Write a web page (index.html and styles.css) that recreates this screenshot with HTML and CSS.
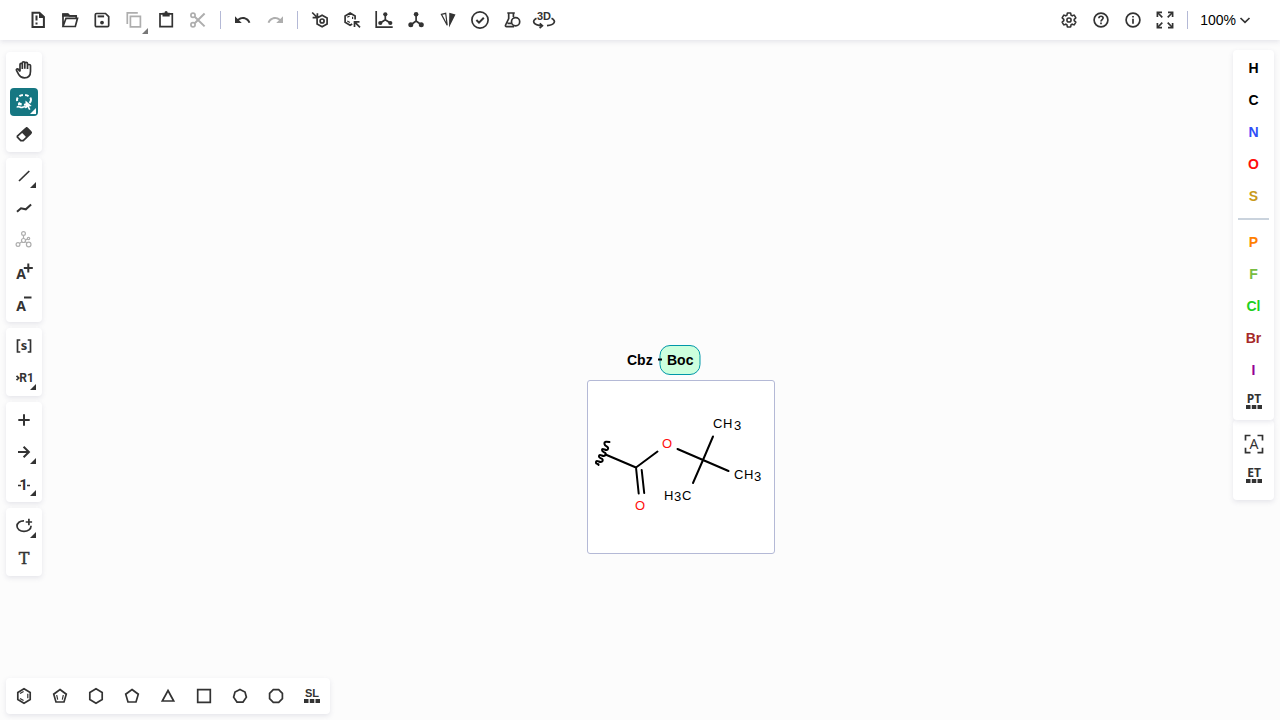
FILE: index.html
```html
<!DOCTYPE html>
<html lang="en">
<head>
<meta charset="utf-8">
<title>Molecule editor</title>
<link rel="stylesheet" href="styles.css">
</head>
<body>
<header class="topbar">
  <button class="tool" aria-label="New document"><svg class="icon" viewBox="0 0 28 28"><path class="l2" d="M8.500 6.700h6.900l4.500 4.300v10H8.500z"/><path class="f" d="M15 6v6h5.500z"/><path class="l2" d="M12.500 9.500v5M12.500 16.600v2"/></svg></button>
  <button class="tool" aria-label="Open"><svg class="icon" viewBox="0 0 28 28"><path class="l" d="M7 20.500V8.200h4.800l1.600 1.800h6.800v2.300M7 20.500h12.300l2.200-8.200H10z"/><path class="f" d="M6.200 7.500h6l1.700 1.500h7v1.700H6.200z"/></svg></button>
  <button class="tool" aria-label="Save"><svg class="icon" viewBox="0 0 28 28"><path class="l" d="M8.500 7.500h9l3.200 3.200v8.800a1.200 1.200 0 0 1-1.200 1.200h-11a1.200 1.200 0 0 1-1.200-1.200V8.700a1.200 1.200 0 0 1 1.200-1.200z"/><path class="l2" d="M9.600 10.400h6.500"/><circle class="f" cx="14" cy="16.600" r="1.900"/></svg></button>
  <button class="tool faded more-edge" aria-label="Copy"><svg class="icon" viewBox="0 0 28 28"><path class="l" d="M7.300 18V6.900h10.500M10.400 10.300h10v10.600h-10z"/></svg></button>
  <button class="tool" aria-label="Paste"><svg class="icon" viewBox="0 0 28 28"><path class="l" d="M8 7.900h12.300v12.700H8z"/><path class="f" d="M10.500 6.700h2a1.600 1.600 0 0 1 3.200 0h2v3.800h-7.200z"/></svg></button>
  <button class="tool faded" aria-label="Cut"><svg class="icon" viewBox="0 0 28 28"><circle class="l" cx="9" cy="9.200" r="2.100"/><circle class="l" cx="9" cy="18.700" r="2.100"/><path class="l2" d="M10.700 10.700l9.900 9.700M10.700 17.300l9.900-9.800"/></svg></button>
  <span class="rule"></span>
  <button class="tool" aria-label="Undo"><svg class="icon" viewBox="0 0 28 28"><path class="f" transform="translate(4.500 5) scale(.75)" d="M12.5 8c-2.65 0-5.05.99-6.9 2.6L2 7v9h9l-3.62-3.62c1.39-1.16 3.16-1.88 5.12-1.88 3.54 0 6.55 2.31 7.6 5.5l2.37-.78C21.08 11.03 17.15 8 12.5 8z"/></svg></button>
  <button class="tool faded" aria-label="Redo"><svg class="icon" viewBox="0 0 28 28"><path class="f" transform="translate(23.500 5) scale(-.75 .75)" d="M12.5 8c-2.65 0-5.05.99-6.9 2.6L2 7v9h9l-3.62-3.62c1.39-1.16 3.16-1.88 5.12-1.88 3.54 0 6.55 2.31 7.6 5.5l2.37-.78C21.08 11.03 17.15 8 12.5 8z"/></svg></button>
  <span class="rule"></span>
  <button class="tool" aria-label="Aromatize"><svg class="icon" viewBox="0 0 28 28"><path class="l" d="M16.100 9.200l5 2.900v5.800l-5 2.900-5-2.900v-5.800zM6.200 6.500l5 5M11.400 7.200v4.500H6.600"/><circle class="l" cx="16.100" cy="15" r="2"/></svg></button>
  <button class="tool" aria-label="Dearomatize"><svg class="icon" viewBox="0 0 28 28"><path class="l" d="M14.200 18l-2.100 1.200-5-2.900V9.900l5-2.900 5 2.900v3.700M22 21.400l-5.200-5.200M16.500 21v-5.100h5"/><path class="l1" d="M9.300 11.300l2.300-1.400M9.300 15l2.600 1.500M14.600 10.700v2.400"/></svg></button>
  <button class="tool" aria-label="Layout"><svg class="icon" viewBox="0 0 28 28"><path class="l" d="M6.200 5v16.200h16.500M15.300 8.300v5.500L10.300 17M15.300 13.800l5 3.200"/><circle class="f" cx="15.300" cy="8.300" r="2.100"/><circle class="f" cx="10.300" cy="17" r="2.100"/><circle class="f" cx="20.300" cy="17" r="2.100"/></svg></button>
  <button class="tool" aria-label="Clean up"><svg class="icon" viewBox="0 0 28 28"><path class="l" d="M14.100 8.300V15L9 18.800M14.100 15l5.200 3.800"/><circle class="f" cx="14.100" cy="8.200" r="2.300"/><circle class="f" cx="8.800" cy="18.800" r="2.500"/><circle class="f" cx="19.300" cy="18.800" r="2.500"/></svg></button>
  <button class="tool" aria-label="Calculate CIP"><svg class="icon" viewBox="0 0 28 28"><path class="l1" d="M7.400 8.400l4.300-1.100 1.500 12z"/><path class="f" d="M15.300 6.800l6.200 1.700-6.500 13z"/></svg></button>
  <button class="tool" aria-label="Check structure"><svg class="icon" viewBox="0 0 28 28"><circle class="l" cx="14" cy="14" r="8.100"/><path class="l2" d="M10.400 14l2.600 2.600 4.800-4.900"/></svg></button>
  <button class="tool" aria-label="Calculated values"><svg class="icon" viewBox="0 0 28 28"><path class="l" d="M9.300 7h7.500M10.700 7v5.500L7.600 19c-.4.900 0 1.700 1 1.700h7.500M15.400 7v4M9.500 17.300h3.700"/><circle class="l" cx="17.600" cy="15.800" r="4.100"/></svg></button>
  <button class="tool" aria-label="3D viewer"><svg class="icon" viewBox="0 0 28 28"><text class="glyph sans" x="14" y="14" font-size="11">3D</text><path class="l" d="M6.500 12.200c-5 2.700-3.500 6.800 5.500 7.500M9.800 17.300l2.600 2.400-2.800 2.300M21.500 12.200c5 2.700 3.500 6.600-4.500 7.500"/></svg></button>
  <div class="top-right">
    <button class="tool" aria-label="Settings"><svg class="icon" viewBox="0 0 28 28"><g class="gear" transform="translate(5.600 5.600) scale(.7)"><path d="M19.43 12.98c.04-.32.07-.64.07-.98 0-.34-.03-.66-.07-.98l2.11-1.65c.19-.15.24-.42.12-.64l-2-3.46c-.09-.16-.26-.25-.44-.25-.06 0-.12.01-.17.03l-2.49 1c-.52-.4-1.08-.73-1.69-.98l-.38-2.65C14.46 2.18 14.25 2 14 2h-4c-.25 0-.46.18-.49.42l-.38 2.65c-.61.25-1.17.59-1.69.98l-2.49-1c-.06-.02-.12-.03-.18-.03-.17 0-.34.09-.43.25l-2 3.46c-.13.22-.07.49.12.64l2.11 1.65c-.04.32-.07.65-.07.98 0 .33.03.66.07.98l-2.11 1.65c-.19.15-.24.42-.12.64l2 3.46c.09.16.26.25.44.25.06 0 .12-.01.17-.03l2.49-1c.52.4 1.08.73 1.69.98l.38 2.65c.03.24.24.42.49.42h4c.25 0 .46-.18.49-.42l.38-2.65c.61-.25 1.17-.59 1.69-.98l2.49 1c.06.02.12.03.18.03.17 0 .34-.09.43-.25l2-3.46c.12-.22.07-.49-.12-.64z"/><circle cx="12" cy="12" r="3"/></g></svg></button>
    <button class="tool" aria-label="Help"><svg class="icon" viewBox="0 0 28 28"><circle class="l" cx="14" cy="14" r="6.900"/><path class="l" d="M11.900 12.300c.1-2.800 4.200-2.600 4.200-.2 0 1.500-2.100 1.600-2.100 3.400M14 16.600v1.600"/></svg></button>
    <button class="tool" aria-label="About"><svg class="icon" viewBox="0 0 28 28"><circle class="l" cx="14" cy="14" r="6.900"/><path class="l" d="M14 12.800v5M14 10v1.600"/></svg></button>
    <button class="tool" aria-label="Fullscreen"><svg class="icon" viewBox="0 0 28 28"><path class="l" d="M7 7l4.300 4.300M21 7l-4.300 4.300M7 21l4.300-4.300M21 21l-4.300-4.300"/><path class="l" d="M6.400 11V6.400H11M17 6.400h4.600V11M6.400 17v4.600H11M17 21.600h4.600V17"/></svg></button>
    <span class="rule"></span>
    <button class="zoom">100%<svg class="chevron" viewBox="0 0 12 12"><path class="l" d="M1.500 4L6 8.300 10.500 4"/></svg></button>
  </div>
</header>

<main class="workspace">
  <section class="canvas" aria-label="Canvas">
    <svg class="chain" width="76" height="32" viewBox="0 0 76 32">
      <rect class="mono-box" x="34" y="1.500" width="40" height="29" rx="10"/>
      <path d="M32 15.500h4" stroke="#000" stroke-width="2"/>
      <text x="1" y="21">Cbz</text><text x="41" y="21">Boc</text>
    </svg>
    <div class="preview">
      <svg width="186" height="172" viewBox="588 381 186 172">
        <g class="bond">
          <path d="M605.500 454.500L636 467.500l21.500-16M677.500 449l25.500 11 25.500 11M713 436.500l-10 23.500-10 23M636 467.500l2.700 26M641.700 470l2.500 23"/>
          <path d="M609.500 442C607 441.500 604 441 604.500 444S609 446 608 449 602 447 602 450 607 452 605.500 455 599.500 453 599 456 604 458 602.500 461 596.500 459 596 462 599 463 598.500 465"/>
        </g>
        <g class="atoms">
          <text x="713 723 734" y="428 428 430">CH3</text>
          <text x="734 744 754" y="479 479 481">CH3</text>
          <text x="664 674 682" y="500 501 500">H3C</text>
          <text class="oxygen" x="662" y="448">O</text>
          <text class="oxygen" x="635" y="510">O</text>
        </g>
      </svg>
    </div>
  </section>

  <nav class="left" aria-label="Tools">
    <div class="panel">
      <button class="tool" aria-label="Hand"><svg class="icon" viewBox="0 0 28 28"><path class="l" d="M10 15.500V8.600c0-1.600 2.300-1.600 2.300 0V13M12.300 12V7c0-1.700 2.500-1.700 2.500 0v5.800M14.800 12V7.600c0-1.600 2.700-1.600 2.700 0V13M17.500 12V9.600c0-1.500 3-1.500 3 0v5.700c0 4.200-2.400 6.600-6 6.600-2.900 0-4.500-1-5.700-3.200l-2.300-4.200c-.6-1.400 1-2.200 1.900-1.100l1.600 2.100"/></svg></button>
      <button class="tool active more" aria-label="Lasso selection" aria-pressed="true"><svg class="icon" viewBox="0 0 28 28"><ellipse class="l2" cx="14" cy="11.800" rx="7" ry="4.900" stroke-dasharray="3.600 2.200"/><path class="l" d="M7 19.500c1-2.600 3.500 1 5.500-.2s2.500-.7 4 .2M8 16.500h3"/><path class="f" d="M15.500 12.500v8l2-1.500 1.500 3 1.500-.8-1.500-2.800 2.700-.3z"/></svg></button>
      <button class="tool" aria-label="Erase"><svg class="icon" viewBox="0 0 28 28"><path class="l" d="M7.400 16.200l8.500-7.900c.5-.5 1-.5 1.500 0l3.400 3.500c.5.500.5 1 0 1.500l-7.600 7.300h-2.400l-3.400-3.400z"/><path class="f" d="M11.500 12.300l5.200-5 5.100 5.200-5.300 5z"/></svg></button>
    </div>
    <div class="panel">
      <button class="tool more" aria-label="Single bond"><svg class="icon" viewBox="0 0 28 28"><path class="l" d="M9 19L19.300 9"/></svg></button>
      <button class="tool" aria-label="Chain"><svg class="icon" viewBox="0 0 28 28"><path class="l2" d="M7 17.800l4-3.500 4.800 1 5.300-4.800"/></svg></button>
      <button class="tool faded" aria-label="Stereochemistry"><svg class="icon" viewBox="0 0 28 28"><g class="l1"><circle cx="13.500" cy="7.500" r="1.900"/><circle cx="13.500" cy="14.500" r="2"/><circle cx="8" cy="18.500" r="1.900"/><circle cx="18.700" cy="18.500" r="2.300"/><circle cx="18.500" cy="12.500" r="1.200"/><path d="M13.500 9.400v3M11.800 15.700l-2.200 1.700M15.300 15.600l1.600 1.400M15.400 14l2-.9"/></g></svg></button>
      <button class="tool" aria-label="Charge plus"><svg class="icon" viewBox="0 0 28 28"><text class="glyph" x="11" y="21" font-size="14">A</text><path class="l2" d="M13.800 10h9M18.300 5.500v9"/></svg></button>
      <button class="tool" aria-label="Charge minus"><svg class="icon" viewBox="0 0 28 28"><text class="glyph" x="11" y="21" font-size="14">A</text><path class="l2" d="M14 7.500h7.500"/></svg></button>
    </div>
    <div class="panel">
      <button class="tool" aria-label="S-group"><svg class="icon" viewBox="0 0 28 28"><path class="l" d="M10.300 8H7.500v12h2.800M17.700 8h2.800v12h-2.800"/><text class="glyph" x="14" y="18" font-size="13">s</text></svg></button>
      <button class="tool more" aria-label="R-group"><svg class="icon" viewBox="0 0 28 28"><path class="l" d="M6.500 11.800L8.800 14l-2.300 2.200"/><text class="glyph mark" x="16.500" y="18" font-size="12">R1</text></svg></button>
    </div>
    <div class="panel">
      <button class="tool" aria-label="Reaction plus"><svg class="icon" viewBox="0 0 28 28"><path class="l2" d="M8.300 14h11.400M14 8.300v11.400"/></svg></button>
      <button class="tool more" aria-label="Reaction arrow"><svg class="icon" viewBox="0 0 28 28"><path class="l2" d="M8 14h10.500M13.600 8.800l5.300 5.200-5.300 5.200"/></svg></button>
      <button class="tool more" aria-label="Reaction mapping"><svg class="icon" viewBox="0 0 28 28"><path class="l" d="M8 15.500h3M17 15.500h3"/><text class="glyph mark" x="13.500" y="20" font-size="15">1</text></svg></button>
    </div>
    <div class="panel">
      <button class="tool more" aria-label="Shape ellipse"><svg class="icon" viewBox="0 0 28 28"><path class="l" d="M14 8.800c-4-.2-7 2.200-7 5.200s3 5.400 7 5.400 7-2.400 7-5.200v-.4"/><path class="l" d="M15.700 10h6.400M18.900 6.800v6.400"/></svg></button>
      <button class="tool" aria-label="Add text"><svg class="icon" viewBox="0 0 28 28"><text class="glyph slab" x="14" y="20" font-size="16">T</text></svg></button>
    </div>
  </nav>

  <aside class="right" aria-label="Atoms">
    <div class="atom-list">
      <button class="tool">H</button>
      <button class="tool">C</button>
      <button class="tool n">N</button>
      <button class="tool o">O</button>
      <button class="tool s">S</button>
      <span class="divider"></span>
      <button class="tool p">P</button>
      <button class="tool fl">F</button>
      <button class="tool cl">Cl</button>
      <button class="tool br">Br</button>
      <button class="tool i">I</button>
      <button class="tool" aria-label="Periodic table"><svg class="icon" viewBox="0 0 28 28"><text class="glyph" x="14" y="15" font-size="12">PT</text><path class="f" d="M6 17h4.500v4H6zM11.800 17h4.500v4h-4.500zM17.500 17H22v4h-4.500z"/></svg></button>
    </div>
    <div class="extra-list">
      <button class="tool" aria-label="Any atom"><svg class="icon" viewBox="0 0 28 28"><path class="l" d="M10.500 5.500h-5v5M17.500 5.500h5v5M10.500 22.700h-5v-5M17.500 22.700h5v-5"/><text class="glyph thin" x="14" y="19" font-size="14">A</text></svg></button>
      <button class="tool" aria-label="Extended table"><svg class="icon" viewBox="0 0 28 28"><text class="glyph" x="14" y="15" font-size="12">ET</text><path class="f" d="M6 17h4.500v4H6zM11.800 17h4.500v4h-4.500zM17.500 17H22v4h-4.500z"/></svg></button>
    </div>
  </aside>

  <nav class="bottom panel" aria-label="Templates">
    <button class="tool" aria-label="Benzene"><svg class="icon" viewBox="0 0 28 28"><path class="l" d="M14 6.800l6.200 3.600v7.200L14 21.200l-6.200-3.600v-7.200z"/><path class="l1" d="M10 11.500l3.600-2.100M10 16.500l3.600 2.100M17.800 11.700v4.600"/></svg></button>
    <button class="tool" aria-label="Cyclopentadiene"><svg class="icon" viewBox="0 0 28 28"><path class="l" d="M14 7.500l6.300 4.700L18 20h-8l-2.300-7.800z"/><path class="l1" d="M10.700 13l1 4.700M17.300 13l-1 4.700"/></svg></button>
    <button class="tool" aria-label="Cyclohexane"><svg class="icon" viewBox="0 0 28 28"><path class="l" d="M14 6.800l6.200 3.600v7.200L14 21.200l-6.200-3.600v-7.200z"/></svg></button>
    <button class="tool" aria-label="Cyclopentane"><svg class="icon" viewBox="0 0 28 28"><path class="l" d="M14 7.500l6.300 4.700L18 20h-8l-2.300-7.800z"/></svg></button>
    <button class="tool" aria-label="Cyclopropane"><svg class="icon" viewBox="0 0 28 28"><path class="l" d="M14 8.500l5.700 10.500H8.300z"/></svg></button>
    <button class="tool" aria-label="Cyclobutane"><svg class="icon" viewBox="0 0 28 28"><path class="l" d="M7.700 7.700h12.600v12.600H7.700z"/></svg></button>
    <button class="tool" aria-label="Cycloheptane"><svg class="icon" viewBox="0 0 28 28"><path class="l" d="M14 7.500l5 2.500 1.400 5.200-3.400 4.900h-6l-3.400-4.900L9 10z"/></svg></button>
    <button class="tool" aria-label="Cyclooctane"><svg class="icon" viewBox="0 0 28 28"><path class="l" d="M11.300 7.700h5.400l3.700 3.700v5.200l-3.700 3.700h-5.400l-3.700-3.700v-5.200z"/></svg></button>
    <button class="tool" aria-label="Structure library"><svg class="icon" viewBox="0 0 28 28"><text class="glyph sans" x="14" y="15" font-size="11">SL</text><path class="f" d="M6 17h4.500v4H6zM11.800 17h4.500v4h-4.500zM17.500 17H22v4h-4.500z"/></svg></button>
  </nav>
</main>
</body>
</html>
```

FILE: styles.css
```css
* { box-sizing: border-box; }

body {
  margin: 0;
  min-height: 100vh;
  display: flex;
  flex-direction: column;
  background: #fcfcfc;
  color: #000;
  font: 14px/20px "Liberation Sans", Arial, sans-serif;
}

.topbar {
  display: flex;
  align-items: center;
  gap: 4px;
  height: 40px;
  padding: 0 29px 0 24px;
  background: #fff;
  box-shadow: 0 2px 5px rgba(103, 104, 132, 0.15);
  z-index: 1;
}

.top-right {
  display: flex;
  align-items: center;
  gap: 4px;
  margin-left: auto;
}

.rule {
  width: 1px;
  height: 18px;
  margin: 0 4px;
  background: #b4b9d6;
}

.tool {
  position: relative;
  display: flex;
  flex: none;
  align-items: center;
  justify-content: center;
  width: 28px;
  height: 28px;
  padding: 0;
  border: 0;
  border-radius: 4px;
  background: none;
  color: #000;
  font: bold 14px/20px "Liberation Sans", Arial, sans-serif;
}

.zoom {
  display: flex;
  align-items: center;
  gap: 3px;
  padding: 0 0 0 4px;
  border: 0;
  background: none;
  color: #000;
  font: 14px/20px "Liberation Sans", Arial, sans-serif;
}

.icon { width: 28px; height: 28px; color: #333; }
.chevron { width: 12px; height: 12px; color: #333; }
.faded .icon { color: #aeaeae; }

.l, .l1, .l2 { fill: none; stroke: currentColor; stroke-width: 1.7; }
.l1 { stroke-width: 1.2; }
.l2 { stroke-width: 2; }
.f { fill: currentColor; }
.gear { fill: none; stroke: currentColor; stroke-width: 2.2; }

.glyph {
  fill: currentColor;
  font-family: "Noto Sans", "Open Sans", sans-serif;
  font-weight: 700;
  text-anchor: middle;
}
.sans { font-family: "Liberation Sans", Arial, sans-serif; }
.mark { font-family: Roboto, sans-serif; }
.slab { font-family: "DejaVu Serif", serif; font-weight: 400; stroke: currentColor; stroke-width: 0.4; }
.thin { font-weight: 400; }

.more::after,
.more-edge::after {
  content: "";
  position: absolute;
  right: 2px;
  bottom: 2px;
  width: 6px;
  height: 6px;
  background: #333;
  clip-path: polygon(100% 0, 100% 100%, 0 100%);
}
.more-edge::after { right: 0; bottom: 0; background: #777; }

.active { background: #167782; }
.active .icon { color: #fff; }
.active::after { background: #fff; }

.workspace {
  flex: 1;
  display: grid;
  grid-template-columns: auto 1fr auto;
  grid-template-rows: 1fr auto;
}

.panel {
  display: flex;
  flex-direction: column;
  gap: 4px;
  padding: 4px;
  border-radius: 4px;
  background: #fff;
  box-shadow: 0 2px 5px rgba(103, 104, 132, 0.15);
}

.left {
  grid-area: 1 / 1;
  display: flex;
  flex-direction: column;
  align-self: start;
  gap: 6px;
  margin: 12px 0 0 6px;
  z-index: 1;
}

.bottom {
  grid-area: 2 / 1 / 3 / 4;
  flex-direction: row;
  justify-self: start;
  gap: 8px;
  margin: 0 0 6px 6px;
  z-index: 1;
}

.right {
  grid-area: 1 / 3;
  align-self: start;
  width: 41px;
  margin: 10px 6px 0 0;
  z-index: 1;
}

.atom-list,
.extra-list {
  display: flex;
  flex-direction: column;
  align-items: center;
  gap: 4px;
  padding: 4px;
  border-radius: 4px;
  background: #fff;
  box-shadow: 0 2px 5px rgba(103, 104, 132, 0.15);
}
.atom-list { position: relative; z-index: 1; }
.extra-list { padding: 10px 4px; }

.divider {
  width: 31px;
  height: 2px;
  margin: 4px 0;
  background: #cad3dd;
}

.n { color: #304ff7; }
.o { color: #ff0d0d; }
.s { color: #c99a19; }
.p { color: #ff8000; }
.fl { color: #78bc42; }
.cl { color: #1fd01f; }
.br { color: #a62929; }
.i { color: #940094; }

.canvas { grid-area: 1 / 1 / 3 / 4; position: relative; }

.chain {
  position: absolute;
  left: 626px;
  top: 304px;
  font: bold 14px "Liberation Sans", Arial, sans-serif;
}
.mono-box { fill: #ccffdd; stroke: #0097a8; stroke-width: 1; }

.preview {
  position: absolute;
  left: 587px;
  top: 340px;
  border: 1px solid #b4b9d6;
  border-radius: 3px;
  background: #fff;
}
.preview svg { display: block; }

.bond { fill: none; stroke: #000; stroke-width: 2; stroke-linecap: round; stroke-linejoin: round; }
.atoms { font: 13px "Liberation Sans", Arial, sans-serif; }
.oxygen { fill: #ff0d0d; }
```
